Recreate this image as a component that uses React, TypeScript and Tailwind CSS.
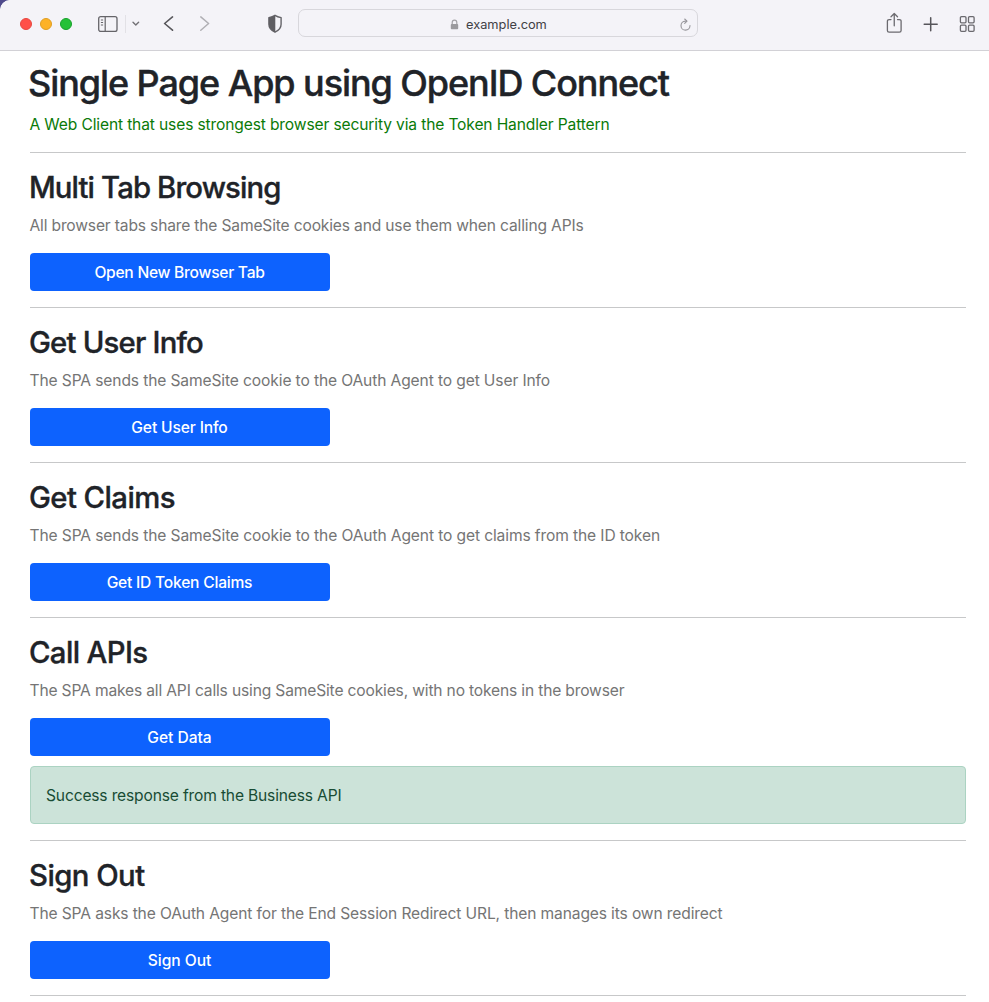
import type { ReactNode } from "react";

function Toolbar() {
  return (
    <header className="flex h-[51px] shrink-0 items-start rounded-tl-[10px] border-b border-[#d2d1d6] bg-[#f4f3f8]">
      <div className="flex h-12 w-[298px] items-center pl-5">
        <div className="flex gap-2">
          <span className="size-3 rounded-full border border-[#e8473f] bg-[#ff5049]" />
          <span className="size-3 rounded-full border border-[#e09e22] bg-[#fdb227]" />
          <span className="size-3 rounded-full border border-[#17a12b] bg-[#25c138]" />
        </div>
        <svg className="ml-[26px]" width="20" height="16" viewBox="0 0 20 16" fill="none" stroke="#656469">
          <rect x="0.7" y="0.7" width="18.3" height="14.8" rx="2" strokeWidth="1.3" />
          <path d="M7.2 0.7V15.5" strokeWidth="1.2" />
          <path d="M2.9 4H5.1M2.9 6.5H5.1M2.9 9H5.1" strokeWidth="1" />
        </svg>
        <span className="ml-[7px] h-[18px] w-px bg-[#e2e1e6]" />
        <svg className="ml-[6px]" width="8" height="6" viewBox="0 0 8 6" fill="none" stroke="#737277" strokeWidth="1.4" strokeLinecap="round" strokeLinejoin="round">
          <path d="M1 1.3L3.8 4.1L6.6 1.3" />
        </svg>
        <svg className="ml-[23px]" width="12" height="16" viewBox="0 0 12 16" fill="none" stroke="#58575c" strokeWidth="1.6" strokeLinecap="round" strokeLinejoin="round">
          <path d="M9.5 0.9L1.6 7.5L9.5 14.2" />
        </svg>
        <svg className="ml-[25px]" width="12" height="16" viewBox="0 0 12 16" fill="none" stroke="#b0afb4" strokeWidth="1.5" strokeLinecap="round" strokeLinejoin="round">
          <path d="M0.8 0.9L8.6 7.5L0.8 14.2" />
        </svg>
        <svg className="ml-[56px]" width="15" height="20" viewBox="0 0 15 20" fill="none">
          <path d="M7 1.3C9 2.6 11 3.2 13.1 3.6V10.2C13.1 14 10.3 16.6 7 18.2C3.7 16.6 0.9 14 0.9 10.2V3.6C3 3.2 5 2.6 7 1.3Z" stroke="#656469" strokeWidth="1.4" strokeLinejoin="round" />
          <path d="M7.3 1.3C5 2.6 3 3.2 0.9 3.6V10.2C0.9 14 3.7 16.6 7.3 18.2Z" fill="#5f5e63" />
        </svg>
      </div>
      <div className="mt-[9px] flex h-7 w-[400px] items-center rounded-[7px] border border-[#d8d7dc] pr-[5px]">
        <svg className="mt-[3px] ml-[151px]" width="9" height="12" viewBox="0 0 9 12" fill="none">
          <path d="M2.2 5.5V3.6C2.2 2 3.1 1.1 4.5 1.1C5.9 1.1 6.8 2 6.8 3.6V5.5" stroke="#a3a2a6" strokeWidth="1.2" />
          <rect x="0.8" y="5" width="7.4" height="5.2" rx="0.9" fill="#9b9a9e" />
        </svg>
        <span className="mt-[3px] ml-[7px] text-[12.8px] leading-4 text-[#414045]">example.com</span>
        <svg className="mt-[3px] ml-auto" width="13" height="13" viewBox="0 0 13 13" fill="none" stroke="#96959a" strokeWidth="1.1" strokeLinecap="round" strokeLinejoin="round">
          <path d="M7.6 3.1H6.4A4.5 4.5 0 1 0 11 7.6" />
          <path d="M5.7 1L8 3.1L5.7 5.4" />
        </svg>
      </div>
      <div className="flex h-12 flex-1 items-center pl-[188px]">
        <svg className="-mt-[2px]" width="17" height="22" viewBox="0 0 17 22" fill="none" stroke="#6b6a6f" strokeWidth="1.3" strokeLinecap="round" strokeLinejoin="round">
          <path d="M5 7.6H3.1C2 7.6 1.4 8.2 1.4 9.3V18.4C1.4 19.5 2 20.1 3.1 20.1H13.4C14.5 20.1 15.1 19.5 15.1 18.4V9.3C15.1 8.2 14.5 7.6 13.4 7.6H11.5" />
          <path d="M8.25 13.8V1.7M5 4.7L8.25 1.5L11.5 4.7" />
        </svg>
        <svg className="ml-[20px]" width="15" height="15" viewBox="0 0 15 15" fill="none" stroke="#56555a" strokeWidth="1.5" strokeLinecap="round">
          <path d="M7.7 0.8V13.8M1.2 7.3H14.2" />
        </svg>
        <svg className="ml-[21px]" width="17" height="17" viewBox="0 0 17 17" fill="none" stroke="#6b6a6f" strokeWidth="1.3">
          <rect x="1.4" y="0.7" width="5.6" height="6.2" rx="1.1" />
          <rect x="9.5" y="0.7" width="5.6" height="6.2" rx="1.1" />
          <rect x="1.4" y="9.2" width="5.6" height="6.2" rx="1.1" />
          <rect x="9.5" y="9.2" width="5.6" height="6.2" rx="1.1" />
        </svg>
      </div>
    </header>
  );
}

interface SectionProps {
  title: string;
  titleClass: string;
  text: string;
  textClass: string;
  button: string;
  buttonClass: string;
  children?: ReactNode;
}

function Section({ title, titleClass, text, textClass, button, buttonClass, children }: SectionProps) {
  return (
    <section className="border-b border-[#c7c8c9] pt-[17px] pb-4">
      <h2 className={`mb-2 -ml-px text-[29.3px] leading-9 font-medium [-webkit-text-stroke:0.35px_#202328] ${titleClass}`}>{title}</h2>
      <p className={`mb-[15px] -ml-[0.5px] text-[15.6px] leading-6 text-[#757575] ${textClass}`}>{text}</p>
      <button className={`block h-[38px] w-[300px] rounded-[4px] bg-[#0d62fe] pt-[2px] pr-px text-center text-[15.6px] leading-6 font-medium text-white ${buttonClass}`}>
        {button}
      </button>
      {children}
    </section>
  );
}

export default function App() {
  return (
    <div className="bg-[#4f4a8c] font-['Inter','Liberation_Sans',sans-serif]">
      <div className="flex h-[1002px] flex-col overflow-hidden rounded-tl-[10px] bg-white">
        <Toolbar />
        <main className="pt-[10px] pr-[23px] pl-[30px] text-[#202328]">
          <div className="border-b border-[#c7c8c9] pb-[15px]">
            <h1 className="mb-2 -ml-[2px] text-[36px] leading-[44px] font-medium tracking-[-1.07px] [-webkit-text-stroke:0.4px_#202328]">Single Page App using OpenID Connect</h1>
            <p className="-ml-[0.5px] text-[15.6px] leading-6 tracking-[-0.14px] text-[#0a7a08]">
              A Web Client that uses strongest browser security via the Token Handler Pattern
            </p>
          </div>
          <Section
            title="Multi Tab Browsing"
            titleClass="tracking-[-0.88px]"
            text="All browser tabs share the SameSite cookies and use them when calling APIs"
            textClass="tracking-[-0.165px]"
            button="Open New Browser Tab"
            buttonClass="tracking-[-0.26px]"
          />
          <Section
            title="Get User Info"
            titleClass="tracking-[-0.8px]"
            text="The SPA sends the SameSite cookie to the OAuth Agent to get User Info"
            textClass="tracking-[-0.125px]"
            button="Get User Info"
            buttonClass="tracking-[-0.14px]"
          />
          <Section
            title="Get Claims"
            titleClass="tracking-[-0.57px]"
            text="The SPA sends the SameSite cookie to the OAuth Agent to get claims from the ID token"
            textClass="tracking-[-0.12px]"
            button="Get ID Token Claims"
            buttonClass="tracking-[-0.22px]"
          />
          <Section
            title="Call APIs"
            titleClass="tracking-[-0.62px]"
            text="The SPA makes all API calls using SameSite cookies, with no tokens in the browser"
            textClass="tracking-[-0.165px]"
            button="Get Data"
            buttonClass="tracking-[-0.04px]"
          >
            <div className="mt-[10px] h-[58px] rounded-[4px] border border-[#abd3c2] bg-[#cce3d9] px-[15px] pt-[17px] text-[15.6px] leading-6 tracking-[-0.165px] text-[#184c34]">
              Success response from the Business API
            </div>
          </Section>
          <Section
            title="Sign Out"
            titleClass="tracking-[-0.55px]"
            text="The SPA asks the OAuth Agent for the End Session Redirect URL, then manages its own redirect"
            textClass="tracking-[-0.133px]"
            button="Sign Out"
            buttonClass="tracking-[-0.04px]"
          />
        </main>
      </div>
    </div>
  );
}
